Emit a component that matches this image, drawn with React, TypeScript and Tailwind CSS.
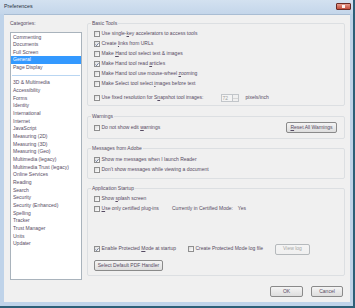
import React from 'react'

const categories = [
  'Commenting', 'Documents', 'Full Screen', 'General', 'Page Display', '-',
  '3D & Multimedia', 'Accessibility', 'Forms', 'Identity', 'International', 'Internet',
  'JavaScript', 'Measuring (2D)', 'Measuring (3D)', 'Measuring (Geo)', 'Multimedia (legacy)',
  'Multimedia Trust (legacy)', 'Online Services', 'Reading', 'Search', 'Security',
  'Security (Enhanced)', 'Spelling', 'Tracker', 'Trust Manager', 'Units', 'Updater',
]

function Box({ checked = false }: { checked?: boolean }) {
  return (
    <span className="w-[6px] h-[6px] shrink-0 border border-[#8f8f8f] bg-gradient-to-br from-[#dcdcdc] to-white flex items-center justify-center">
      {checked && (
        <svg width="5" height="5" viewBox="0 0 5 5">
          <path d="M0.6 2.6 L1.9 3.9 L4.4 0.9" fill="none" stroke="#3a4d75" strokeWidth="0.9" />
        </svg>
      )}
    </span>
  )
}

function Check({ checked, children, className = '' }: { checked?: boolean; children: React.ReactNode; className?: string }) {
  return (
    <div className={`flex items-center gap-[1.5px] h-[10px] ${className}`}>
      <Box checked={checked} />
      <span className="whitespace-nowrap">{children}</span>
    </div>
  )
}

function Btn({ children, className = '' }: { children: React.ReactNode; className?: string }) {
  return (
    <div className={`h-[11px] flex items-center justify-center rounded-[2px] border border-[#8a8a8a] bg-gradient-to-b from-[#f4f4f4] to-[#dedede] whitespace-nowrap ${className}`}>
      {children}
    </div>
  )
}

function Group({ title, children, className = '' }: { title: string; children: React.ReactNode; className?: string }) {
  return (
    <fieldset className={`border border-[#dcdfe2] rounded-[2px] pl-[6px] pr-[6px] ${className}`}>
      <legend className="px-[1px] -ml-[3px] h-[7px] leading-[7px]">{title}</legend>
      {children}
    </fieldset>
  )
}

export default function App() {
  return (
    <div className="w-[355px] h-[308px] bg-[#bfd3e9] border-r-2 border-b-2 border-[#2e5f78] flex flex-col overflow-hidden text-[5px] text-[#564b63] font-['Liberation_Sans',_Arial,_sans-serif]">
      {/* Title bar */}
      <div className="h-[14px] shrink-0 flex items-center pl-[4px] pr-[2px] bg-gradient-to-b from-[#d3e1f0] to-[#c4d6ea]">
        <span className="text-[5.3px] text-[#26303c]">Preferences</span>
        <div className="ml-auto w-[15px] h-[7px] mb-[1px] rounded-[1px] border border-[#6b2a24] bg-gradient-to-b from-[#e49c8f] to-[#c24b3a] flex items-center justify-center">
          <span className="w-[3px] h-[3px] bg-white/90" />
        </div>
      </div>

      {/* Client area */}
      <div className="flex-1 ml-[4px] mr-[3px] mb-[4px] bg-[#f0f0f0] border-t border-[#a9bdd3] flex flex-col">
        <div className="flex pl-[6px] pt-[5px]">
          {/* Categories */}
          <div className="w-[72px] flex flex-col">
            <div className="h-[7px] leading-[7px]">Categories:</div>
            <div className="mt-[5px] h-[248px] bg-white border border-[#a9b3bc] py-[0.5px]">
              {categories.map((c) =>
                c === '-' ? (
                  <div key="sep" className="h-[7.67px] flex items-center px-[1px]">
                    <div className="w-full h-[1.5px] bg-[#b9d6f2]" />
                  </div>
                ) : (
                  <div
                    key={c}
                    className={`h-[7.67px] leading-[7.67px] pl-[2px] whitespace-nowrap ${c === 'General' ? 'bg-[#3399ff] text-white' : ''}`}
                  >
                    {c}
                  </div>
                ),
              )}
            </div>
          </div>

          {/* Panels */}
          <div className="w-[258px] ml-[5px] flex flex-col">
            <Group title="Basic Tools" className="h-[86px]">
              <div className="pt-[2px] flex flex-col">
                <Check>Use single-<u>k</u>ey accelerators to access tools</Check>
                <Check checked>Create <u>l</u>inks from URLs</Check>
                <Check>Make <u>H</u>and tool select text &amp; images</Check>
                <Check checked>Make Hand tool read <u>a</u>rticles</Check>
                <Check>Make Hand tool use mouse-wheel <u>z</u>ooming</Check>
                <Check>Make Select tool select <u>i</u>mages before text</Check>
                <div className="flex items-center h-[10px] mt-[4px]">
                  <Box />
                  <span className="ml-[1.5px] w-[119px] whitespace-nowrap">Use fixed resolution for S<u>n</u>apshot tool images:</span>
                  <div className="w-[12px] h-[8px] border border-[#c2c6ca] bg-[#f4f4f4] text-[#a0a0a0] leading-[6px] pl-[1px]">72</div>
                  <div className="w-[6px] h-[8px] border border-[#c2c6ca] border-l-0 flex flex-col">
                    <span className="flex-1 border-b border-[#d6d6d6]" />
                    <span className="flex-1" />
                  </div>
                  <span className="ml-[7px]">pixels/inch</span>
                </div>
              </div>
            </Group>

            <Group title="Warnings" className="h-[26px] mt-[7px]">
              <div className="flex items-center pt-[2px]">
                <Check>Do not show edit <u>w</u>arnings</Check>
                <Btn className="ml-auto w-[51px] mr-[1px]"><span><u>R</u>eset All Warnings</span></Btn>
              </div>
            </Group>

            <Group title="Messages from Adobe" className="h-[34px] mt-[6px]">
              <div className="pt-[3px] flex flex-col">
                <Check checked>Show me messages when I launch Reader</Check>
                <Check>Don't show messages while viewing a document</Check>
              </div>
            </Group>

            <Group title="Application Startup" className="h-[91.5px] mt-[5.5px]">
              <div className="pt-[2.5px] flex flex-col">
                <Check>Show <u>s</u>plash screen</Check>
                <div className="flex items-center">
                  <Check className="w-[78px]"><u>U</u>se only certified plug-ins</Check>
                  <span>Currently in Certified Mode:</span>
                  <span className="ml-[5px]">Yes</span>
                </div>
                <div className="flex items-center mt-[29.5px]">
                  <Check checked className="w-[94px]">Enable Protected <u>M</u>ode at startup</Check>
                  <Check>Create Protected Mode log file</Check>
                  <Btn className="ml-auto mr-[28px] w-[35px] border-[#b5b9bc] text-[#a6a6a6] from-[#f4f4f4] to-[#f0f0f0]">View log</Btn>
                </div>
                <Btn className="mt-[5.5px] w-[69px]">Select Default PDF Handler</Btn>
              </div>
            </Group>
          </div>
        </div>

        {/* Bottom buttons */}
        <div className="flex justify-end gap-[8px] pr-[7px] mt-[6px]">
          <Btn className="w-[33px] border-[#3c7fb1] from-[#eaf4fc] to-[#d4e8f8]">OK</Btn>
          <Btn className="w-[32px]">Cancel</Btn>
        </div>
      </div>
    </div>
  )
}
